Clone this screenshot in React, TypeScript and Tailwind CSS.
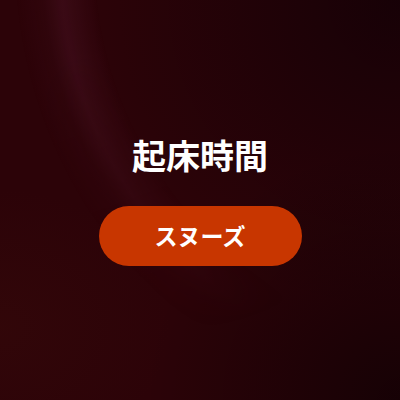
import React from "react";

const AlarmScreen: React.FC = () => {
    return (
        <div
            className="relative w-full h-[400px] overflow-hidden bg-[#2c0308] flex flex-col items-center justify-center"
            style={{ fontFamily: '"Noto Sans CJK JP", "Noto Sans", sans-serif' }}
        >
            {/* background light streaks */}
            <div className="absolute inset-0 bg-[radial-gradient(circle_at_480px_-40px,transparent_385px,rgba(80,22,42,0.4)_420px,rgba(65,14,28,0.2)_438px,transparent_465px)] [mask-image:linear-gradient(160deg,black_15%,rgba(0,0,0,0.5)_45%,transparent_75%)]" />
            <div className="absolute inset-0 bg-[radial-gradient(ellipse_at_100%_0%,rgba(12,0,6,0.65),transparent_55%)]" />
            <div className="absolute inset-0 bg-[radial-gradient(ellipse_at_100%_100%,rgba(5,0,3,0.55),transparent_45%)]" />
            <div className="absolute inset-0 bg-[radial-gradient(ellipse_at_0%_82%,rgba(70,18,12,0.22),transparent_30%)]" />

            <h1 className="relative text-[34px] leading-[40px] font-bold text-white">起床時間</h1>
            <button className="relative mt-[31px] w-[203px] h-[60px] rounded-full bg-[#c83600] text-white text-[23px] font-bold">
                スヌーズ
            </button>
        </div>
    );
};

export default function App() {
    return <AlarmScreen />;
}
